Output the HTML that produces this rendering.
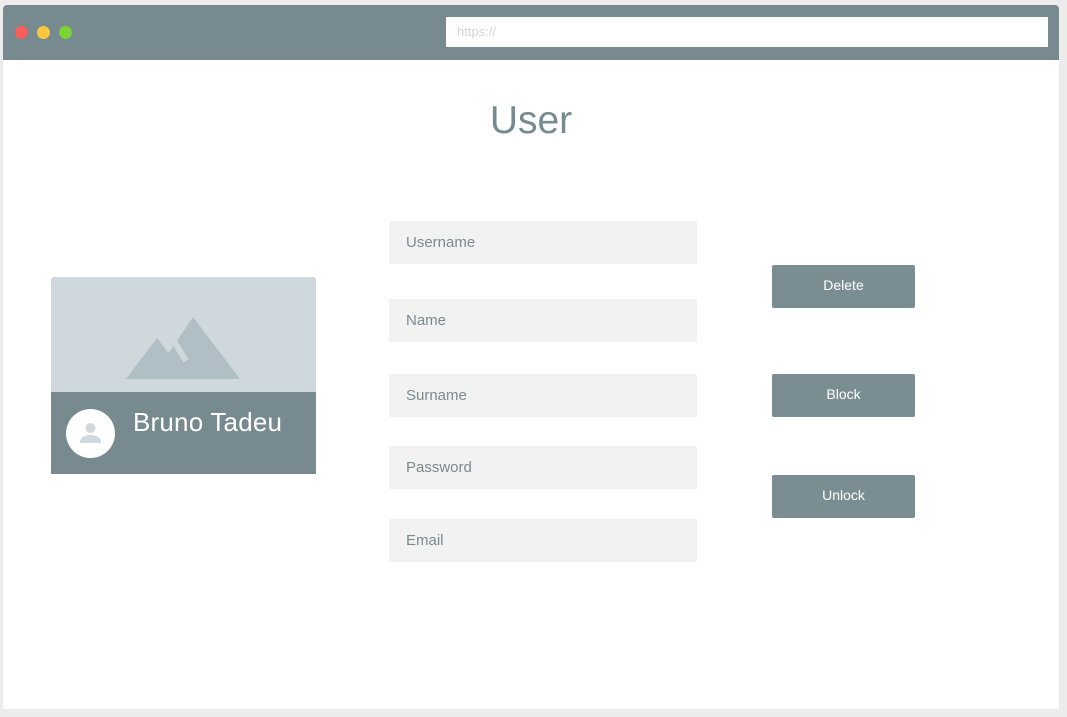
<!DOCTYPE html>
<html><head><style>
body{margin:0;width:1067px;height:717px;background:#ececec;position:relative;overflow:hidden;font-family:"Liberation Sans",Roboto,sans-serif}
.win{position:absolute;left:3px;top:5px;width:1056px;height:704px;background:#fff;border-radius:4px 4px 0 0;overflow:hidden}
.bar{position:absolute;left:0;top:0;width:100%;height:55px;background:#778a8f}
.dot{position:absolute;top:21px;width:13px;height:13px;border-radius:50%}
.url{position:absolute;left:443px;top:12px;width:602px;height:30px;background:#fff;color:#d0d6da;font-size:13px;line-height:30px;padding-left:11px;box-sizing:border-box}
h1{position:absolute;left:0;width:100%;top:94px;margin:0;text-align:center;font-weight:normal;font-size:39px;color:#778a8f}
.in{position:absolute;left:386px;width:308px;height:43px;background:#f2f2f2;color:#7a8a8f;font-size:15px;line-height:43px;padding-left:17px;box-sizing:border-box}
.btn{position:absolute;left:769px;width:143px;height:43px;background:#7a8d92;color:#fff;font-size:14px;text-align:center;line-height:40px;border-radius:2px}
.card{position:absolute;left:48px;top:272px;width:265px;height:197px;background:#cfd8dd;border-radius:3px 3px 0 0;overflow:hidden}
.foot{position:absolute;left:0;top:115px;width:100%;height:82px;background:#778a8f}
</style></head><body>
<div class="win">
<div class="bar">
<div class="dot" style="left:12px;background:#fb5c5c"></div>
<div class="dot" style="left:34px;background:#fdc73b"></div>
<div class="dot" style="left:56px;background:#7ad433"></div>
<div class="url">https://</div>
</div>
<h1>User</h1>
<div class="in" style="top:216px">Username</div>
<div class="in" style="top:294px">Name</div>
<div class="in" style="top:369px">Surname</div>
<div class="in" style="top:441px">Password</div>
<div class="in" style="top:514px">Email</div>
<div class="btn" style="top:260px">Delete</div>
<div class="btn" style="top:369px">Block</div>
<div class="btn" style="top:470px">Unlock</div>
<div class="card">
<svg width="265" height="115" style="position:absolute;left:0;top:0">
<polygon points="75,102 106,61 137,102" fill="#b0bfc5"/>
<polygon points="100,102 142,40 189,102" fill="#b0bfc5"/>
<line x1="121" y1="61" x2="135" y2="84" stroke="#cfd8dd" stroke-width="6"/>
</svg>
<div class="foot">
<div style="position:absolute;left:15px;top:17px;width:49px;height:49px;border-radius:50%;background:#fff">
<svg width="49" height="49"><circle cx="24.5" cy="19" r="5" fill="#cfd8dd"/><path d="M14 33c0-5 6-7 10.5-7s10.5 2 10.5 7v1H14z" fill="#cfd8dd"/></svg>
</div>
<div style="position:absolute;left:82px;top:15px;color:#fff;font-size:26px;letter-spacing:0.2px">Bruno Tadeu</div>
</div>
</div>
</div>
</body></html>
